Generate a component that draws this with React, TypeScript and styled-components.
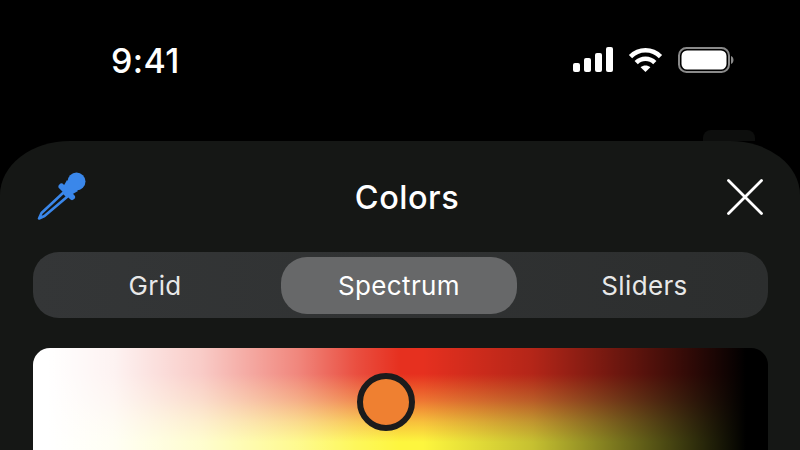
import React from 'react';
import styled, { createGlobalStyle } from 'styled-components';

const GlobalStyle = createGlobalStyle`
  html, body {
    margin: 0;
    padding: 0;
    background: #000;
  }
`;

const Page = styled.div`
  width: 800px;
  height: 450px;
  overflow: hidden;
  background: #000;
  font-family: Inter, 'Liberation Sans', sans-serif;
  color: #fff;
`;

const StatusBar = styled.div`
  height: 141px;
  box-sizing: border-box;
  padding: 40px 66px 0 111px;
  display: flex;
  justify-content: space-between;
  align-items: flex-start;
`;

const Time = styled.div`
  font-size: 34px;
  line-height: 41px;
  font-weight: 500;
  letter-spacing: 0.4px;
`;

const StatusIcons = styled.div`
  display: flex;
  align-items: flex-start;
  gap: 15px;
  padding-top: 7px;
`;

const Sheet = styled.div`
  position: relative;
  background: #151715;
  border-radius: 70px 70px 0 0 / 54px 54px 0 0;
  padding: 0 32px 0 33px;
`;

const PeekingTab = styled.div`
  position: absolute;
  top: -11px;
  right: 45px;
  width: 52px;
  height: 11px;
  background: #0d0e0d;
  border-radius: 8px 8px 0 0;
`;

const Header = styled.div`
  height: 111px;
  display: flex;
  align-items: center;
  justify-content: space-between;
`;

const Title = styled.div`
  font-size: 32.5px;
  font-weight: 500;
  letter-spacing: 0.5px;
  padding-top: 2px;
`;

const DropperButton = styled.div`
  width: 50px;
  height: 50px;
  margin: 0 0 2px 4px;
`;

const CloseButton = styled.div`
  width: 36px;
  height: 36px;
  margin-right: 5px;
`;

const Tabs = styled.div`
  height: 66px;
  box-sizing: border-box;
  padding: 5px 4px 4px;
  display: grid;
  grid-template-columns: 236px 236px 1fr;
  column-gap: 8px;
  background: linear-gradient(to right, #343637, #2c2e2e);
  border-radius: 26px;
`;

const Tab = styled.div<{ $active?: boolean }>`
  display: flex;
  align-items: center;
  justify-content: center;
  font-size: 26px;
  font-weight: 400;
  letter-spacing: 0.35px;
  border-radius: 26px;
  color: ${({ $active }) => ($active ? '#fff' : '#e8e8e8')};
  background: ${({ $active }) => ($active ? '#676869' : 'transparent')};
`;

const Spectrum = styled.div`
  position: relative;
  margin-top: 30px;
  height: 300px;
  border-radius: 17px 17px 0 0;
  background:
    linear-gradient(to right, #fff 2%, rgba(255, 255, 255, 0.94) 11%, rgba(255, 255, 255, 0.75) 23%, rgba(255, 255, 255, 0.42) 36%, rgba(255, 255, 255, 0.15) 44%, rgba(255, 255, 255, 0) 50%, rgba(0, 0, 0, 0) 53%, rgba(0, 0, 0, 0.22) 68%, rgba(0, 0, 0, 0.62) 83%, #000 97%),
    linear-gradient(to bottom, #e6301f 0, #e6301f 26px, #ee7432 52px, #f7c03c 74px, #fdf63e 94px, #fdf63e 102px);
`;

const Knob = styled.div`
  position: absolute;
  top: 25px;
  left: 324px;
  width: 58px;
  height: 58px;
  box-sizing: border-box;
  border: 6px solid #1b1b1c;
  border-radius: 50%;
  background: #ef8031;
`;

const SignalIcon = () => (
  <svg width="40" height="26" viewBox="0 0 40 26">
    <g fill="#fff">
      <rect x="0" y="16" width="7" height="9" rx="2" />
      <rect x="11" y="11" width="7" height="14" rx="2" />
      <rect x="22" y="6" width="7" height="19" rx="2" />
      <rect x="33" y="0" width="7" height="25" rx="2" />
    </g>
  </svg>
);

const WifiIcon = () => (
  <svg width="35" height="26" viewBox="0 0 35 26">
    <g fill="none" stroke="#fff" strokeWidth="4.6">
      <path d="M2.5 9.6 C10.8 1.2 24.2 1.2 32.5 9.6" />
      <path d="M8.2 15.6 C13.4 10.4 21.6 10.4 26.8 15.6" />
    </g>
    <path d="M12.6 20.2 C15.4 17.8 19.6 17.8 22.4 20.2 L17.5 25 Z" fill="#fff" />
  </svg>
);

const BatteryIcon = () => (
  <svg width="56" height="26" viewBox="0 0 56 26">
    <rect x="1" y="1" width="50" height="24" rx="7.5" fill="none" stroke="#8a8a8a" strokeWidth="2" />
    <rect x="3.5" y="3.5" width="45" height="19" rx="5.5" fill="#fff" />
    <path d="M53 9 C55 10 55.5 11.5 55.5 13 C55.5 14.5 55 16 53 17 Z" fill="#8a8a8a" />
  </svg>
);

const DropperIcon = () => (
  <svg width="50" height="50" viewBox="0 0 50 50">
    <circle cx="39.5" cy="10.5" r="9" fill="#3a87ea" />
    <path d="M30 9 L41 20 L34 24 L26 16 Z" fill="#3a87ea" />
    <path d="M24.5 15.5 L35 26" stroke="#3a87ea" strokeWidth="6" strokeLinecap="round" />
    <path d="M26.5 21.5 L30.5 25.5 L7.5 45 L2 47.5 L4.5 42 Z" fill="none" stroke="#3a87ea" strokeWidth="2.6" strokeLinejoin="round" />
  </svg>
);

const CloseIcon = () => (
  <svg width="36" height="36" viewBox="0 0 36 36">
    <path d="M1.5 1.5 L34.5 34.5 M34.5 1.5 L1.5 34.5" stroke="#fff" strokeWidth="2.8" strokeLinecap="round" />
  </svg>
);

export default function App() {
  return (
    <Page>
      <GlobalStyle />
      <StatusBar>
        <Time>9:41</Time>
        <StatusIcons>
          <SignalIcon />
          <WifiIcon />
          <BatteryIcon />
        </StatusIcons>
      </StatusBar>
      <Sheet>
        <PeekingTab />
        <Header>
          <DropperButton>
            <DropperIcon />
          </DropperButton>
          <Title>Colors</Title>
          <CloseButton>
            <CloseIcon />
          </CloseButton>
        </Header>
        <Tabs>
          <Tab>Grid</Tab>
          <Tab $active>Spectrum</Tab>
          <Tab>Sliders</Tab>
        </Tabs>
        <Spectrum>
          <Knob />
        </Spectrum>
      </Sheet>
    </Page>
  );
}
